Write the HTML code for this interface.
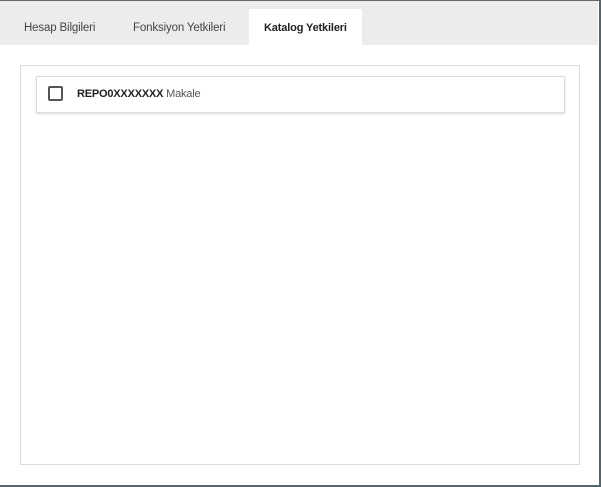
<!DOCTYPE html>
<html><head><style>
body{margin:0;width:601px;height:487px;overflow:hidden;background:#fff;font-family:"Liberation Sans",sans-serif;}
.frame{position:absolute;left:0;top:0;border-top:1px solid #666;border-right:2px solid #56646b;border-bottom:2px solid #56646b;box-sizing:border-box;width:601px;height:487px;}
.bar{position:absolute;left:0;top:1px;width:598px;height:44px;background:#ececec;}
.tab{position:absolute;top:22px;font-size:11.5px;color:#444;letter-spacing:-0.15px;}
.active{position:absolute;left:249px;top:9px;width:113px;height:36px;background:#fff;}
.panel{position:absolute;left:20px;top:65px;width:560px;height:400px;border:1px solid #dcdcdc;box-sizing:border-box;}
.row{position:absolute;left:36px;top:76px;width:529px;height:37px;border:1px solid #ddd;box-sizing:border-box;box-shadow:0 1px 2px rgba(0,0,0,.15);}
.cb{position:absolute;left:11px;top:9px;width:15px;height:15px;border:2px solid #555;box-sizing:border-box;border-radius:2px;}
.t{position:absolute;left:40px;top:11px;font-size:11px;color:#222;letter-spacing:-0.2px;}
</style></head><body>
<div class="bar"></div>
<div class="active"></div>
<div class="tab" style="left:24px">Hesap Bilgileri</div>
<div class="tab" style="left:133px">Fonksiyon Yetkileri</div>
<div class="tab" style="left:264px;color:#222;font-weight:bold;font-size:11px">Katalog Yetkileri</div>
<div class="panel"></div>
<div class="row"><div class="cb"></div><div class="t"><b>REPO0XXXXXXX</b> <span style="color:#555">Makale</span></div></div>
<div class="frame"></div>
</body></html>
